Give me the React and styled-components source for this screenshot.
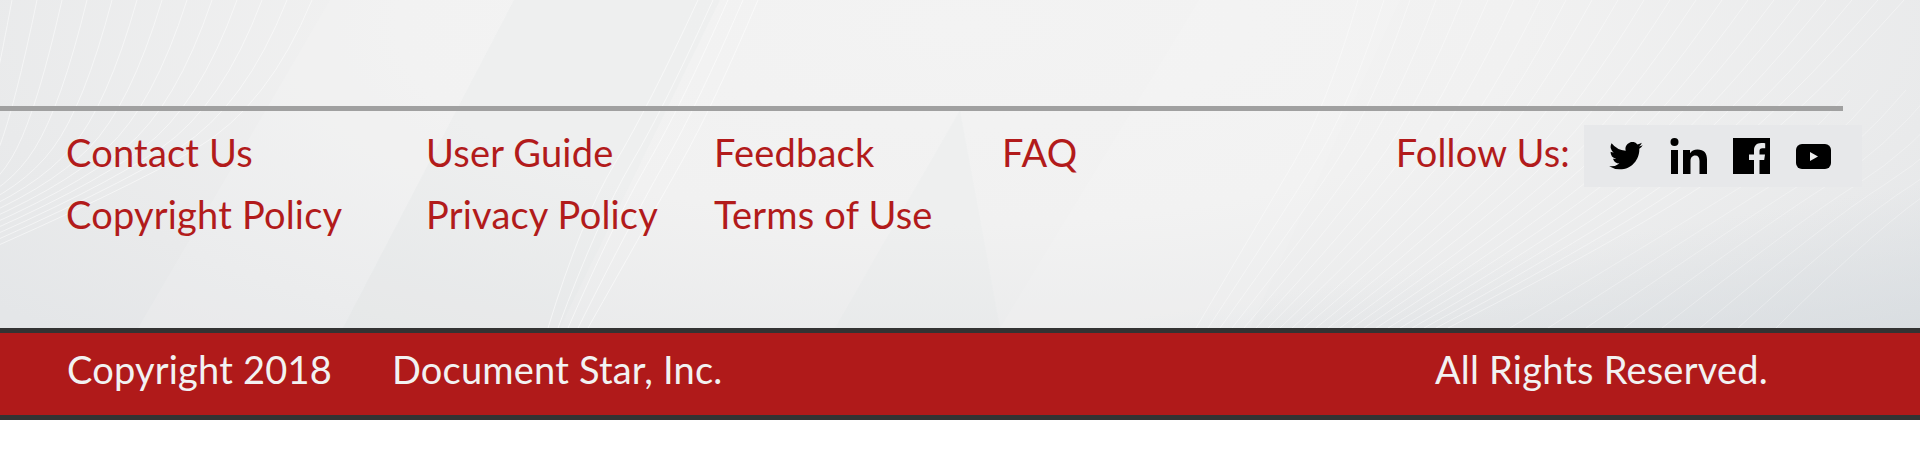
import React from 'react';
import styled, { createGlobalStyle } from 'styled-components';

const GlobalStyle = createGlobalStyle`
  html, body { margin: 0; padding: 0; background: #fff; }
  body { font-family: Lato, "Liberation Sans", sans-serif; }
`;

const Footer = styled.footer`
  width: 1920px;
  height: 420px;
  display: flex;
  flex-direction: column;
`;

// light grey texture area above the red copyright bar
const Panel = styled.div`
  position: relative;
  flex: 1;
  padding-top: 106px;
  overflow: hidden;
  background:
    linear-gradient(to top left, rgba(214, 219, 223, 0.75), rgba(214, 219, 223, 0) 22%),
    radial-gradient(ellipse 1250px 440px at 50% 8%, #f3f3f3 0%, #f1f1f1 45%, #e9eaeb 80%, #e4e6e8 100%);
`;

const Texture = styled.svg`
  position: absolute;
  inset: 0;
  width: 1920px;
  height: 328px;
`;

const Rule = styled.div`
  position: relative;
  width: 1843px;
  height: 5px;
  background: #a0a0a0;
`;

const LinksRow = styled.div`
  position: relative;
  display: flex;
  justify-content: space-between;
  padding: 10px 0 0 66px;
  width: 1862px;
  box-sizing: border-box;
`;

const LinkGrid = styled.div`
  display: grid;
  grid-template-columns: 360px 288px 288px auto;
  grid-auto-rows: 62px;
  align-content: start;
`;

const FooterLink = styled.a`
  font-size: 38px;
  line-height: 62px;
  letter-spacing: 0.2px;
  color: #b21b1b;
  text-decoration: none;
`;

const Social = styled.div`
  display: flex;
  align-items: flex-start;
`;

const FollowLabel = styled.span`
  font-size: 38px;
  line-height: 62px;
  letter-spacing: 0.2px;
  color: #b21b1b;
  margin-right: 14px;
`;

const IconBox = styled.div`
  display: flex;
  align-items: center;
  gap: 26px;
  height: 62px;
  padding: 0 31px 0 24px;
  margin-top: 4px;
  background: #e7e8ea;
`;

const CopyBar = styled.div`
  display: flex;
  align-items: center;
  height: 71px;
  padding: 0 0 11px 67px;
  background: #b01a1a;
  border-top: 5px solid #333;
  border-bottom: 5px solid #333;
  color: #f2f2f2;
  font-size: 38px;
  letter-spacing: 0.2px;
`;

const CopyText = styled.span`
  width: ${({ $width }) => $width}px;
  white-space: nowrap;
`;

const TwitterIcon = () => (
  <svg width="36" height="28" viewBox="0 0 24 20" fill="#000">
    <path d="M24 2.4a9.8 9.8 0 0 1-2.8.8A4.9 4.9 0 0 0 23.3.5a9.8 9.8 0 0 1-3.1 1.2 4.9 4.9 0 0 0-8.4 4.500A14 14 0 0 1 1.700.900a4.900 4.900 0 0 0 1.500 6.600 4.900 4.900 0 0 1-2.200-.600 4.900 4.900 0 0 0 3.900 4.900 4.900 4.900 0 0 1-2.200.100 4.900 4.900 0 0 0 4.600 3.400A9.900 9.900 0 0 1 0 17.300 14 14 0 0 0 7.500 19.500c9.100 0 14.300-7.700 14-14.600A10 10 0 0 0 24 2.400z" />
  </svg>
);

const LinkedinIcon = () => (
  <svg width="37" height="36" viewBox="0 0 37 36" fill="#000">
    <circle cx="4.500" cy="4" r="4" />
    <rect x="1" y="12" width="7" height="24" />
    <path d="M13 12h7v3.200C21.300 13 24 11.500 27.500 11.500c6.500 0 9.500 3.500 9.500 10V36h-7.500V23c0-3.500-1.300-5.500-4.300-5.500S20.500 19.800 20.500 23v13H13z" />
  </svg>
);

const FacebookIcon = () => (
  <svg width="37" height="36" viewBox="0 0 37 36">
    <path fill="#000" d="M0 0h37v36H26.500V22h4.700l.8-5.500h-5.500V13c0-1.700.7-2.800 3-2.800h2.700V5.300c-1-.1-2.500-.3-4-.3-4.500 0-7.200 2.700-7.200 7.500v4H16V22h5v14H0z" />
  </svg>
);

const YoutubeIcon = () => (
  <svg width="35" height="25" viewBox="0 0 35 25">
    <rect width="35" height="25" rx="6" fill="#000" />
    <path d="M14 8l8 4.500-8 4.500z" fill="#f0f0f0" />
  </svg>
);

const links = [
  'Contact Us', 'User Guide', 'Feedback', 'FAQ',
  'Copyright Policy', 'Privacy Policy', 'Terms of Use',
];

// smooth curve through the points read off the background texture
const curve = ([a, b, c, d]) => {
  const midX = (b[0] + c[0]) / 2;
  const midY = (b[1] + c[1]) / 2;
  return `M${a[0]} ${a[1]}Q${b[0]} ${b[1]} ${midX} ${midY}Q${c[0]} ${c[1]} ${d[0]} ${d[1]}`;
};

const range = (n) => Array.from({ length: n }, (_, i) => i);

const rightFan = range(22).map((i) => curve([
  [1358 + i * 26, 0],
  [1327 + i * 23, 106],
  [1260 + i * 19, 220],
  [1196 + i * 12, 328],
]));

const farFan = range(8).map((i) => curve([
  [1850 + i * 28, 90],
  [1800 + i * 28, 150],
  [1688 + i * 28, 220],
  [1510 + i * 38, 328],
]));

const middleFan = range(5).map((i) => curve([
  [698 + i * 15, 0],
  [649 + i * 16, 106],
  [581 + i * 17, 220],
  [548 + i * 10, 328],
]));

const leftFan = range(13).map((i) => curve([
  [12 + i * 25, 0],
  [-8 + i * 23, 106],
  [-30 + i * 13, 190],
  [-40, 190 + i * 6],
]));

export default function App() {
  return (
    <>
      <GlobalStyle />
      <Footer>
        <Panel>
          <Texture viewBox="0 0 1920 328">
            <polygon points="330,0 514,0 343,328 138,328" fill="#fff" opacity="0.12" />
            <polygon points="514,0 720,0 560,328 343,328" fill="#dfe0e2" opacity="0.14" />
            <polygon points="960,110 1000,328 835,328" fill="#dfe0e2" opacity="0.14" />
            <polygon points="1199,0 1400,0 1250,328 1000,328" fill="#fff" opacity="0.1" />
            <g fill="none" stroke="#fff" strokeWidth="1">
              {leftFan.map((d) => <path key={d} d={d} opacity="0.5" />)}
              {middleFan.map((d) => <path key={d} d={d} opacity="0.55" />)}
              {rightFan.map((d) => <path key={d} d={d} opacity="0.4" />)}
              {farFan.map((d) => <path key={d} d={d} opacity="0.3" />)}
            </g>
          </Texture>
          <Rule />
          <LinksRow>
            <LinkGrid>
              {links.map((label) => (
                <FooterLink key={label} href="#">{label}</FooterLink>
              ))}
            </LinkGrid>
            <Social>
              <FollowLabel>Follow Us:</FollowLabel>
              <IconBox>
                <TwitterIcon />
                <LinkedinIcon />
                <FacebookIcon />
                <YoutubeIcon />
              </IconBox>
            </Social>
          </LinksRow>
        </Panel>
        <CopyBar>
          <CopyText $width={325}>Copyright 2018</CopyText>
          <CopyText $width={1043}>Document Star, Inc.</CopyText>
          <CopyText $width={400}>All Rights Reserved.</CopyText>
        </CopyBar>
      </Footer>
    </>
  );
}
